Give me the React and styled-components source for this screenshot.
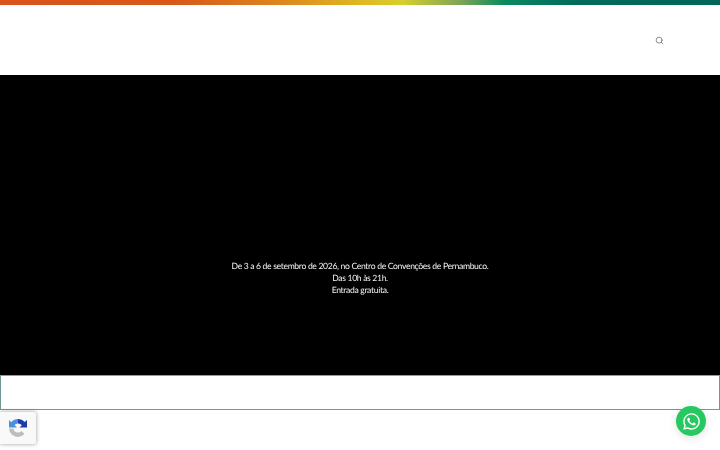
import styled, { createGlobalStyle } from 'styled-components';
import { Search } from 'lucide-react';
import { FaWhatsapp } from 'react-icons/fa';

const GlobalStyle = createGlobalStyle`
  html, body {
    margin: 0;
    padding: 0;
    background: #fff;
    overflow: hidden;
  }
  body {
    font-family: Lato, "Liberation Sans", sans-serif;
  }
`;

const Page = styled.div`
  width: 720px;
  height: 450px;
  display: flex;
  flex-direction: column;
`;

const ColorBar = styled.div`
  height: 5px;
  background: linear-gradient(
    90deg,
    #d9531a 0%,
    #d8591a 25%,
    #de8a1f 40%,
    #dfb822 50%,
    #d6cf2e 56%,
    #7da455 64%,
    #0a8a5f 70%,
    #006a5b 80%,
    #00665a 100%
  );
`;

const Header = styled.header`
  height: 70px;
  display: flex;
  align-items: center;
  justify-content: flex-end;
  padding-right: 56px;
  color: #555;
`;

const Hero = styled.section`
  height: 300px;
  background: #000;
  color: #f2f2f2;
  display: flex;
  flex-direction: column;
  align-items: center;
  justify-content: flex-end;
  padding-bottom: 79px;
  box-sizing: border-box;
  font-size: 8.6px;
  letter-spacing: -0.33px;
  line-height: 12px;
  text-align: center;
  text-rendering: geometricPrecision;
  will-change: transform;
`;

const BoxedRow = styled.div`
  height: 35px;
  box-sizing: border-box;
  border: 1px solid #6f9a96;
  border-top-color: #7fa5a1;
`;

const RecaptchaBadge = styled.div`
  position: fixed;
  left: 0;
  top: 412px;
  width: 36px;
  height: 32px;
  box-sizing: border-box;
  background: #f9f9f9;
  border-radius: 0 2px 2px 0;
  box-shadow: 0 0 4px rgba(0, 0, 0, 0.4);
  display: flex;
  align-items: center;
  justify-content: flex-end;
  padding-right: 8px;
`;

const WhatsAppButton = styled.a`
  position: fixed;
  left: 676px;
  top: 406px;
  width: 30px;
  height: 30px;
  border-radius: 50%;
  background: #26c95f;
  color: #fff;
  display: flex;
  align-items: center;
  justify-content: center;
  box-shadow: 0 2px 8px rgba(0, 0, 0, 0.12);
`;

function RecaptchaLogo() {
  return (
    <svg width="20" height="20" viewBox="0 0 20 20">
      <path d="M10 1 A9 9 0 0 1 16.8 4 L19 2 V9.5 H11.5 L13.8 7.2 A4.5 4.5 0 0 0 10 5.5 Z" fill="#1c3aa9" />
      <path d="M1 9.5 V2 L3.3 4.2 A9 9 0 0 1 10 1 V5.5 A4.5 4.5 0 0 0 6.5 7 L9 9.5 Z" fill="#4a90e2" />
      <path d="M1 10.5 H5.5 A4.5 4.5 0 0 0 10 14.5 A4.5 4.5 0 0 0 13.5 13 L16.5 16 A9 9 0 0 1 10 19 A9 9 0 0 1 1 10.5 Z" fill="#bdbdbd" />
    </svg>
  );
}

function App() {
  return (
    <Page>
      <GlobalStyle />
      <ColorBar />
      <Header>
        <Search size={9} strokeWidth={1.8} />
      </Header>
      <Hero>
        <div>De 3 a 6 de setembro de 2026, no Centro de Convenções de Pernambuco.</div>
        <div>Das 10h às 21h.</div>
        <div>Entrada gratuita.</div>
      </Hero>
      <BoxedRow />
      <RecaptchaBadge>
        <RecaptchaLogo />
      </RecaptchaBadge>
      <WhatsAppButton>
        <FaWhatsapp size={19} />
      </WhatsAppButton>
    </Page>
  );
}

export default App;
